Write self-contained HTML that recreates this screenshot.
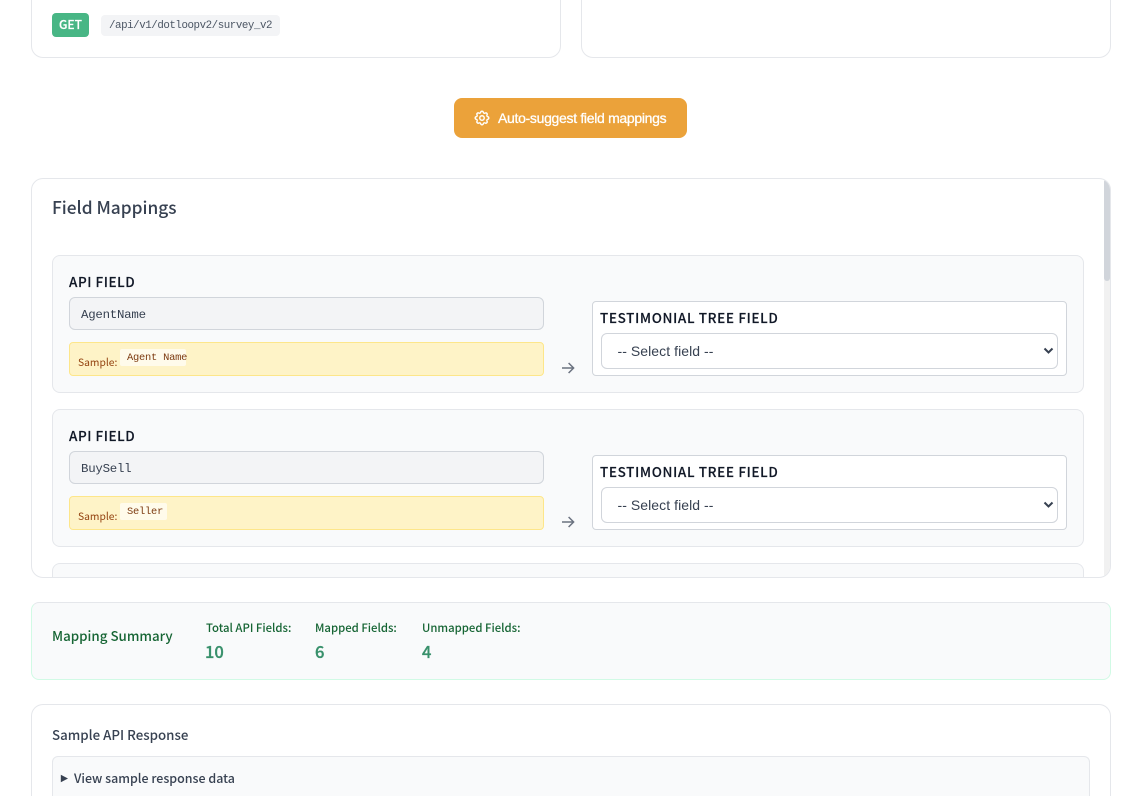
<!DOCTYPE html>
<html lang="en"><head><meta charset="utf-8"><title>Field Mappings</title>
<style>
*{box-sizing:border-box}
html,body{margin:0;padding:0;background:#fff;width:1143px;height:796px;overflow:hidden}
body{position:relative;font-family:"Noto Sans CJK JP","Liberation Sans",sans-serif;color:#374151}
.a{position:absolute}
.t{position:absolute;white-space:nowrap;line-height:1}
.card{position:absolute;background:#fff;border:1px solid #e5e7eb;border-radius:12px}
.mono{font-family:"Liberation Mono",monospace}
.row{position:absolute;left:52px;width:1032px;height:138px;background:#f9fafb;border:1px solid #e5e7eb;border-radius:8px}
.lab{position:absolute;white-space:nowrap;line-height:1;font-size:13.5px;font-weight:500;letter-spacing:.55px;color:#111827;-webkit-text-stroke:.15px #111827}
.lab.w{letter-spacing:.64px}
.inp{position:absolute;left:69px;width:475px;height:33px;background:#f3f4f6;border:1px solid #d1d5db;border-radius:6px}
.smp{position:absolute;left:69px;width:475px;height:34px;background:#fef3c7;border:1px solid #fde68a;border-radius:4px}
.box{position:absolute;left:592px;width:475px;height:75px;background:#fff;border:1px solid #d1d5db;border-radius:4px}
.sel{position:absolute;left:601px;width:457px;height:36px;background:#fff;border:1px solid #d1d5db;border-radius:6px}
.code{position:absolute;background:#fffbeb;border-radius:2px;height:17px}
.fn{font-size:12.4px;letter-spacing:-.24px;color:#374151}
.sl{font-size:10.3px;color:#92400e}
.cv{font-size:10.4px;letter-spacing:-.22px;color:#7c3a10}
.st{font:14px/14px 'Liberation Sans',sans-serif;color:#374151;letter-spacing:.06px}
.sm{font-size:11.35px;font-weight:500;color:#166534}
.sn{font-size:16.5px;font-weight:500;color:#38906b;-webkit-text-stroke:.3px #38906b}
</style></head><body>

<div class="card" style="left:31px;top:0;width:530px;height:58px;border-top:0;border-radius:0 0 12px 12px"></div>
<div class="card" style="left:581px;top:0;width:530px;height:58px;border-top:0;border-radius:0 0 12px 12px"></div>
<div class="a" style="left:52px;top:13px;width:37px;height:24px;background:#48b685;border-radius:4px"></div>
<div class="t" style="left:59px;top:19px;font-size:12px;font-weight:500;color:#fff;-webkit-text-stroke:.2px #fff">GET</div>
<div class="a" style="left:101px;top:15px;width:179px;height:21px;background:#f3f4f6;border-radius:4px"></div>
<div class="t mono" style="left:109px;top:21px;font-size:10.8px;letter-spacing:-.44px;color:#4b5563">/api/v1/dotloopv2/survey_v2</div>

<div class="a" style="left:454px;top:98px;width:233px;height:40px;background:#eba23a;border-radius:8px"></div>
<svg class="a" style="left:473px;top:109px" width="18" height="18" viewBox="0 0 24 24" fill="none" stroke="#fff" stroke-width="1.9" stroke-linecap="round" stroke-linejoin="round"><path d="M10.3 4.3c.4-1.8 3-1.8 3.4 0a1.7 1.7 0 0 0 2.6 1.1c1.5-.9 3.3.8 2.4 2.4a1.7 1.7 0 0 0 1 2.5c1.8.4 1.8 3 0 3.4a1.7 1.7 0 0 0-1 2.6c.9 1.5-.9 3.3-2.4 2.4a1.7 1.7 0 0 0-2.6 1c-.4 1.8-3 1.8-3.4 0a1.7 1.7 0 0 0-2.5-1c-1.6.9-3.3-.9-2.4-2.4a1.7 1.7 0 0 0-1.1-2.6c-1.8-.4-1.8-3 0-3.4a1.7 1.7 0 0 0 1.1-2.5c-.9-1.6.8-3.3 2.4-2.4a1.7 1.7 0 0 0 2.5-1.1z"/><circle cx="12" cy="12" r="3"/></svg>
<div class="t" style="left:498px;top:111px;font:14px/14px 'Liberation Sans',sans-serif;color:#fff;-webkit-text-stroke:.3px #fff;letter-spacing:-.31px">Auto-suggest field mappings</div>

<div class="card" style="left:31px;top:178px;width:1080px;height:400px;overflow:hidden">
  <div class="a" style="right:0;top:0;width:6px;height:100%;background:#f1f1f1"></div>
  <div class="a" style="right:0;top:0;width:6px;height:102px;background:#d1d5db;border-radius:3px"></div>
</div>
<div class="t" style="left:52px;top:198px;font-size:17.3px;font-weight:500;color:#374151">Field Mappings</div>

<div class="row" style="top:255px"></div>
<div class="lab" style="left:69px;top:275px">API FIELD</div>
<div class="inp" style="top:297px"></div>
<div class="t mono fn" style="left:81px;top:309px">AgentName</div>
<div class="smp" style="top:342px"></div>
<div class="t sl" style="left:78px;top:357px">Sample:</div>
<div class="code" style="left:120px;top:349px;width:66px"></div>
<div class="t mono cv" style="left:127px;top:353px">Agent Name</div>
<svg class="a" style="left:561px;top:361px" width="14" height="14" viewBox="0 0 14 14" fill="none" stroke="#6b7280" stroke-width="1.5"><path d="M1 7h11.5M7.6 2l5 5-5 5"/></svg>
<div class="box" style="top:301px"></div>
<div class="lab w" style="left:600px;top:311px">TESTIMONIAL TREE FIELD</div>
<div class="sel" style="top:333px"></div>
<div class="t st" style="left:617.5px;top:344px">-- Select field --</div>
<svg class="a" style="left:1043px;top:347px" width="11" height="8" viewBox="0 0 11 8" fill="none" stroke="#374151" stroke-width="2"><path d="M1.5 1.5l4 4 4-4"/></svg>

<div class="row" style="top:409px"></div>
<div class="lab" style="left:69px;top:429px">API FIELD</div>
<div class="inp" style="top:451px"></div>
<div class="t mono fn" style="left:81px;top:463px">BuySell</div>
<div class="smp" style="top:496px"></div>
<div class="t sl" style="left:78px;top:511px">Sample:</div>
<div class="code" style="left:120px;top:503px;width:47px"></div>
<div class="t mono cv" style="left:127px;top:507px">Seller</div>
<svg class="a" style="left:561px;top:515px" width="14" height="14" viewBox="0 0 14 14" fill="none" stroke="#6b7280" stroke-width="1.5"><path d="M1 7h11.5M7.6 2l5 5-5 5"/></svg>
<div class="box" style="top:455px"></div>
<div class="lab w" style="left:600px;top:465px">TESTIMONIAL TREE FIELD</div>
<div class="sel" style="top:487px"></div>
<div class="t st" style="left:617.5px;top:498px">-- Select field --</div>
<svg class="a" style="left:1043px;top:501px" width="11" height="8" viewBox="0 0 11 8" fill="none" stroke="#374151" stroke-width="2"><path d="M1.5 1.5l4 4 4-4"/></svg>

<div class="a" style="left:52px;top:563px;width:1032px;height:14px;background:#f9fafb;border:1px solid #e5e7eb;border-bottom:0;border-radius:8px 8px 0 0"></div>

<div class="a" style="left:31px;top:602px;width:1080px;height:78px;background:#f9fafb;border:1px solid #e5e7eb;border-left-color:#d1fae5;border-right-color:#d1fae5;border-bottom-color:#d1fae5;border-radius:8px"></div>
<div class="t" style="left:52px;top:629px;font-size:13.35px;font-weight:500;color:#166534">Mapping Summary</div>
<div class="t sm" style="left:206px;top:623px">Total API Fields:</div>
<div class="t sm" style="left:315px;top:623px">Mapped Fields:</div>
<div class="t sm" style="left:422px;top:623px">Unmapped Fields:</div>
<div class="t sn" style="left:205px;top:643px">10</div>
<div class="t sn" style="left:315px;top:643px">6</div>
<div class="t sn" style="left:422px;top:643px">4</div>

<div class="card" style="left:31px;top:704px;width:1080px;height:92px;border-bottom:0;border-radius:12px 12px 0 0"></div>
<div class="t" style="left:52px;top:728px;font-size:13.3px;font-weight:500;color:#374151">Sample API Response</div>
<div class="a" style="left:52px;top:756px;width:1038px;height:40px;background:#f9fafb;border:1px solid #e5e7eb;border-bottom:0;border-radius:6px 6px 0 0"></div>
<svg class="a" style="left:60px;top:774px" width="9" height="9" viewBox="0 0 9 9"><path d="M.8.8 8 4.5.8 8.2z" fill="#374151"/></svg>
<div class="t" style="left:74px;top:772px;font-size:12.45px;font-weight:500;color:#374151">View sample response data</div>
</body></html>
